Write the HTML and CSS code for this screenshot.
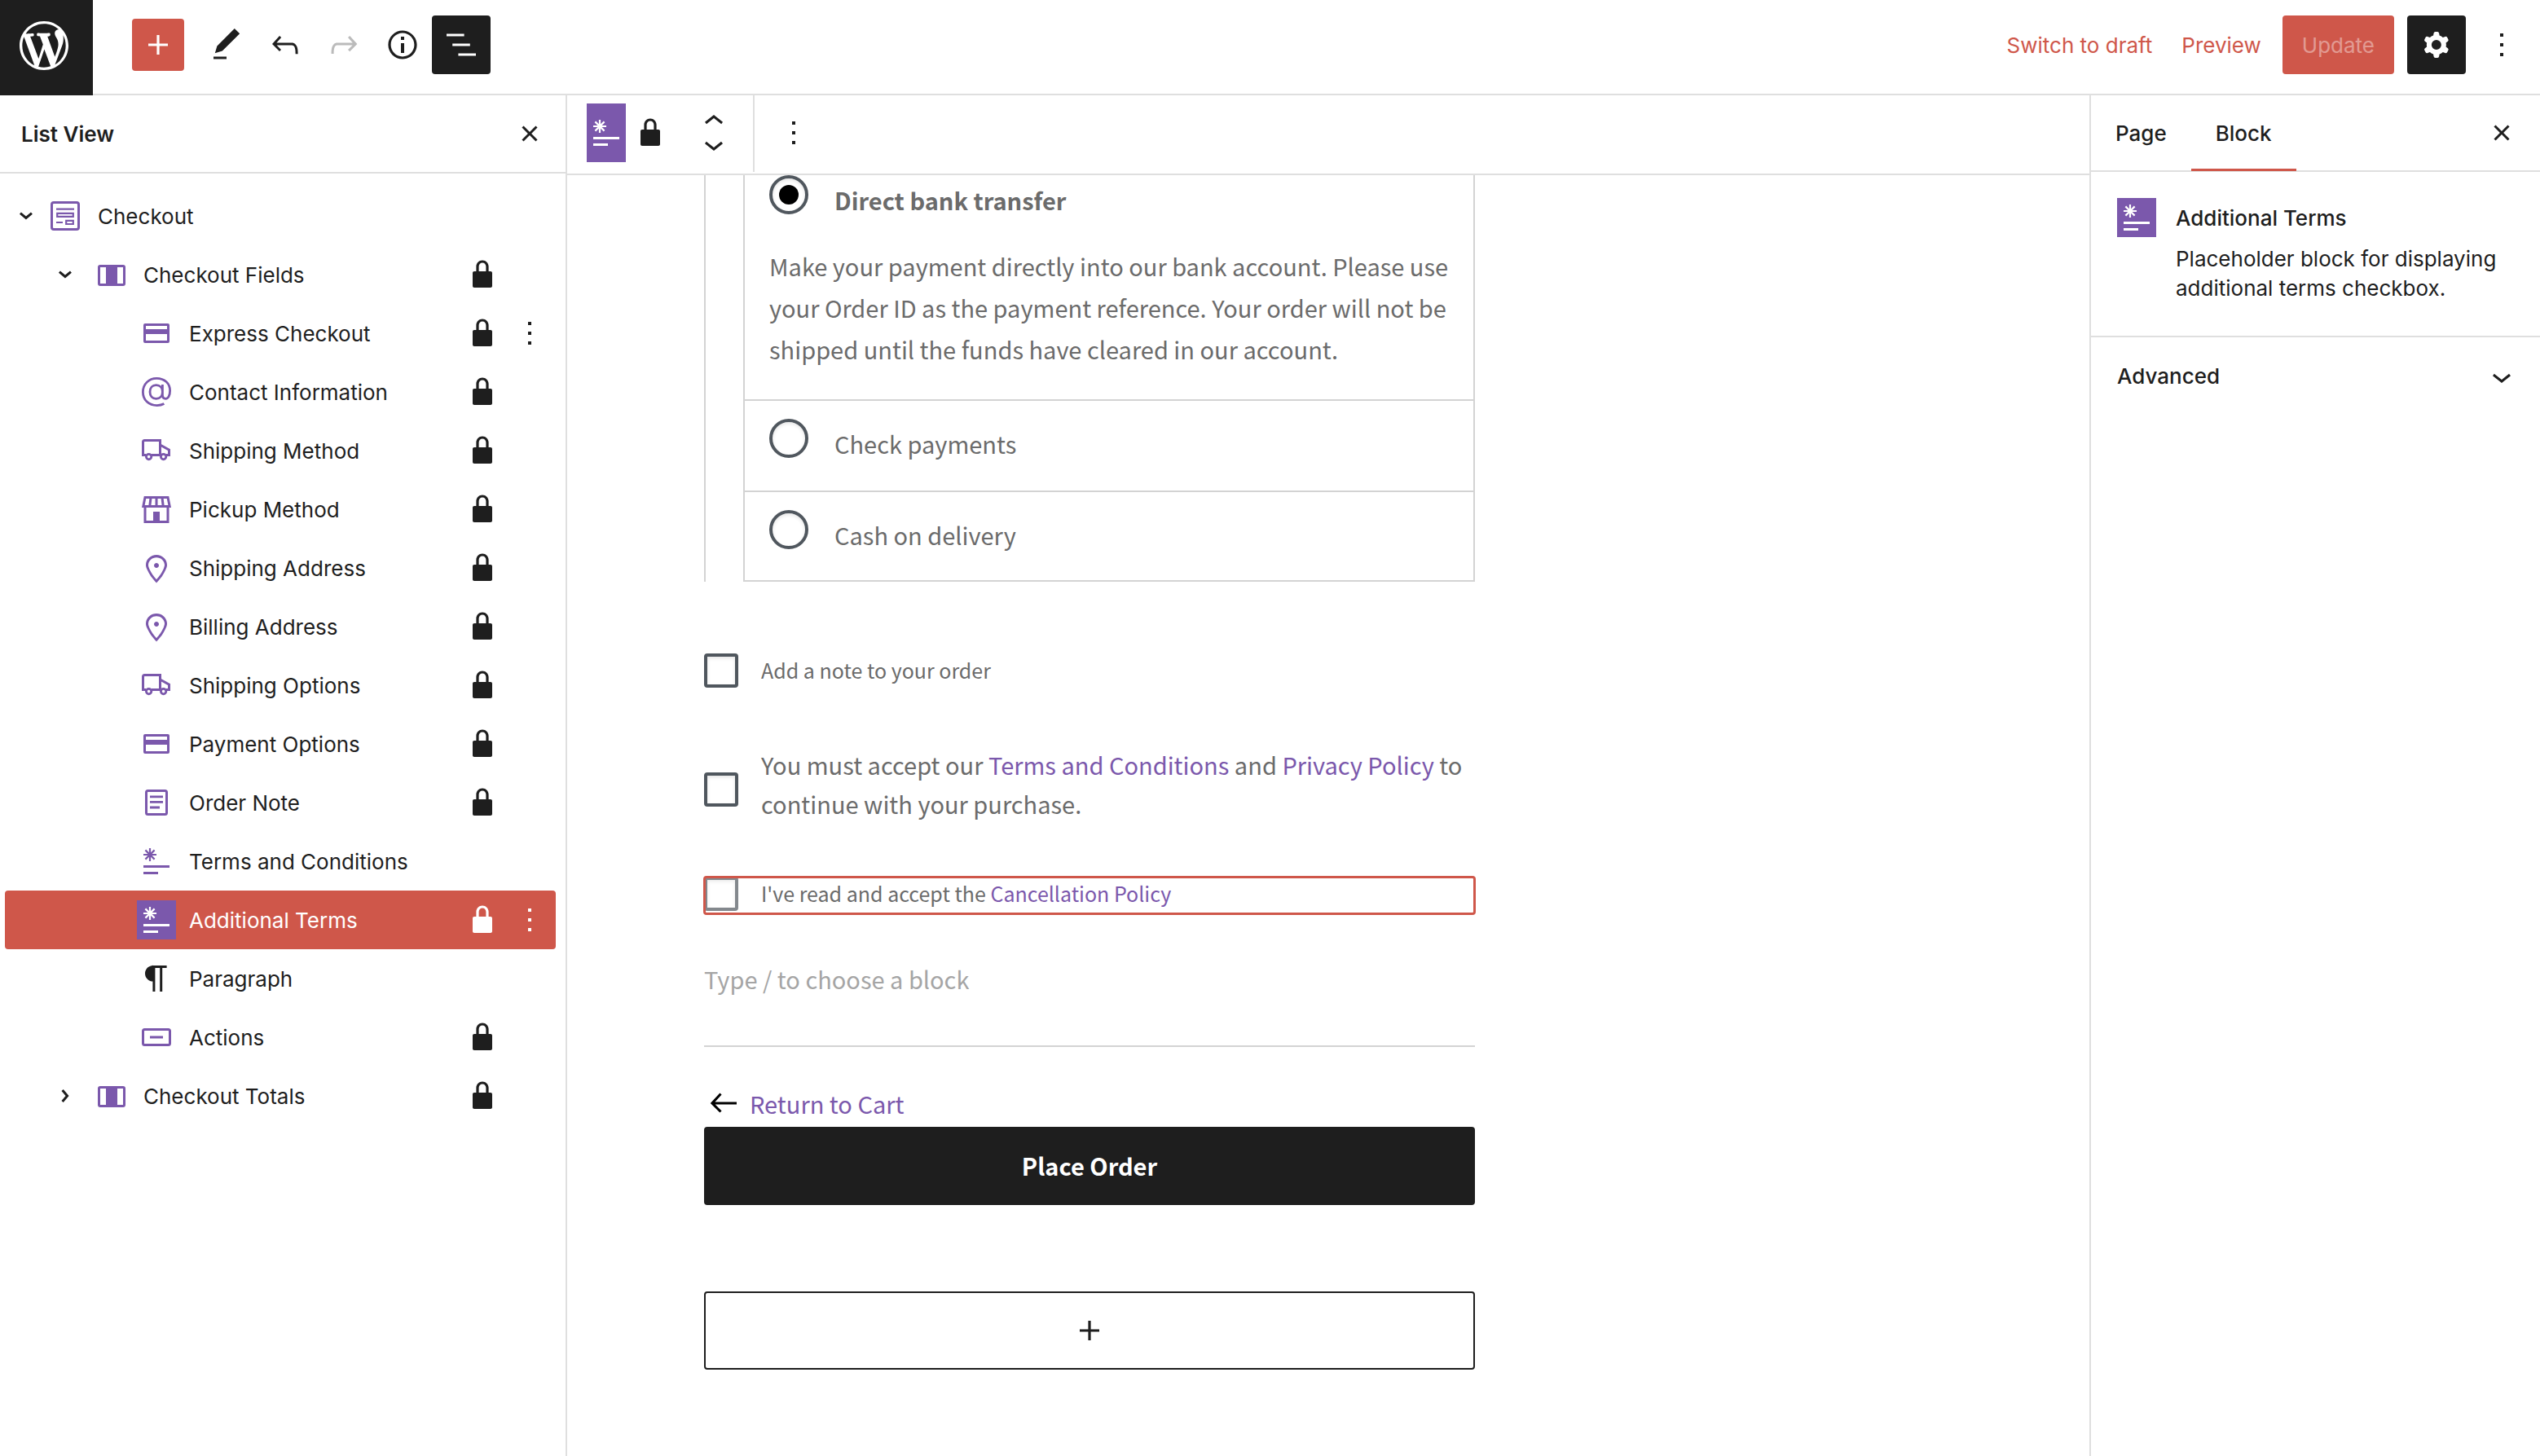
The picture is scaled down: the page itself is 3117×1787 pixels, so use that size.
FILE: index.html
```html
<!DOCTYPE html>
<html lang="en">
<head>
<meta charset="utf-8">
<meta name="viewport" content="width=device-width, initial-scale=1">
<title>Edit Page: Checkout</title>
<link rel="stylesheet" href="styles.css">
</head>
<body>
<svg class="sprite" aria-hidden="true">
  <symbol id="i-plus" viewBox="0 0 24 24"><path d="M18 11.2h-5.2V6h-1.6v5.2H6v1.6h5.2V18h1.6v-5.2H18z"/></symbol>
  <symbol id="i-edit" viewBox="0 0 24 24"><path d="M20.1 5.1L16.9 2 6.2 12.7l-1.3 4.4 4.5-1.3L20.1 5.1zM4 20.8h8v-1.5H4v1.5z"/></symbol>
  <symbol id="i-undo" viewBox="0 0 24 24"><path d="M18.3 11.7c-.6-.6-1.4-.9-2.3-.9H6.7l2.9-3.3-1.1-1-4.5 5L8.5 16l1-1-2.7-2.7H16c.5 0 .9.2 1.3.5 1 1 1 3.4 1 4.5v.3h1.5v-.2c0-1.5 0-4.3-1.5-5.7z"/></symbol>
  <symbol id="i-redo" viewBox="0 0 24 24"><path d="M15.6 6.5l-1.1 1 2.9 3.3H8c-.9 0-1.7.3-2.3.9-1.4 1.5-1.4 4.2-1.4 5.6v.2h1.5v-.3c0-1.1 0-3.5 1-4.5.3-.3.7-.5 1.3-.5h9.2L14.5 15l1.1 1.1 4.6-4.6-4.6-5z"/></symbol>
  <symbol id="i-info" viewBox="0 0 24 24"><path d="M12 3.2c-4.8 0-8.8 3.9-8.8 8.8 0 4.8 3.9 8.8 8.8 8.8 4.8 0 8.8-3.9 8.8-8.8 0-4.8-4-8.8-8.8-8.8zm0 16c-4 0-7.2-3.3-7.2-7.2C4.8 8 8 4.8 12 4.8s7.2 3.3 7.2 7.2c0 4-3.2 7.2-7.2 7.2zM11 17h2v-6h-2v6zm0-8h2V7h-2v2z"/></symbol>
  <symbol id="i-listview" viewBox="0 0 24 24"><path d="M13.8 5.2H3v1.5h10.8V5.2zm-3.6 12v1.5H21v-1.5H10.2zm7.2-6H6.6v1.5h10.8v-1.5z"/></symbol>
  <symbol id="i-cog" viewBox="0 0 24 24"><path fill-rule="evenodd" d="M10.289 4.836A1 1 0 0111.275 4h1.306a1 1 0 01.987.836l.244 1.466c.787.26 1.503.679 2.108 1.218l1.393-.522a1 1 0 011.216.437l.653 1.13a1 1 0 01-.23 1.273l-1.148.944a6.025 6.025 0 010 2.435l1.149.946a1 1 0 01.23 1.272l-.653 1.13a1 1 0 01-1.216.437l-1.394-.522c-.605.54-1.32.958-2.108 1.218l-.244 1.466a1 1 0 01-.987.836h-1.306a1 1 0 01-.986-.836l-.244-1.466a5.995 5.995 0 01-2.108-1.218l-1.394.522a1 1 0 01-1.217-.436l-.653-1.131a1 1 0 01.23-1.272l1.149-.946a6.026 6.026 0 010-2.435l-1.148-.944a1 1 0 01-.23-1.272l.653-1.131a1 1 0 011.217-.437l1.393.522a5.994 5.994 0 012.108-1.218l.244-1.466zM14.929 12a3 3 0 11-6 0 3 3 0 016 0z"/></symbol>
  <symbol id="i-close" viewBox="0 0 24 24"><path d="M12 13.06l3.712 3.713 1.061-1.06L13.061 12l3.712-3.712-1.06-1.06L12 10.938 8.288 7.227l-1.061 1.06L10.939 12l-3.712 3.712 1.06 1.061L12 13.061z"/></symbol>
  <symbol id="i-more" viewBox="0 0 24 24"><path d="M13 19h-2v-2h2v2zm0-6h-2v-2h2v2zm0-6h-2V5h2v2z"/></symbol>
  <symbol id="i-down" viewBox="0 0 24 24"><path d="M17.5 11.6L12 16l-5.5-4.4.9-1.2L12 14l4.5-3.6 1 1.2z"/></symbol>
  <symbol id="i-up" viewBox="0 0 24 24"><path d="M6.5 12.4L12 8l5.5 4.4-.9 1.2L12 10l-4.5 3.6-1-1.2z"/></symbol>
  <symbol id="i-right" viewBox="0 0 24 24"><path d="M10.862 8.04l3.418 3.989-3.418 3.988-1.139-.977 2.582-3.011-2.582-3.012 1.139-.977z"/></symbol>
  <symbol id="i-lock" viewBox="0 0 24 24"><path d="M17 10h-1.2V7c0-2.1-1.7-3.8-3.8-3.8-2.1 0-3.8 1.7-3.8 3.8v3H7c-.6 0-1 .4-1 1v8c0 .6.4 1 1 1h10c.6 0 1-.4 1-1v-8c0-.6-.4-1-1-1zm-2.8 0H9.8V7c0-1.2 1-2.2 2.2-2.2s2.2 1 2.2 2.2v3z"/></symbol>
  <symbol id="i-arrow" viewBox="0 0 24 24"><path d="M20 10.8H6.7l4.1-4.5-1.1-1.1-5.8 6.3 5.8 5.8 1.1-1.1-4-3.9H20z"/></symbol>
  <symbol id="i-checkout" viewBox="0 0 24 24"><path fill="none" stroke="currentColor" stroke-width="1.5" d="M5 3.75h14q1.25 0 1.25 1.25v14q0 1.25-1.25 1.25H5q-1.25 0-1.25-1.25V5q0-1.25 1.25-1.25z"/><path fill="none" stroke="currentColor" stroke-width="1.1" d="M6.5 7.8h11M7.1 10.4h9.800v2H7.100zM6.500 16h4M12.600 14.900h4.300v2.100h-4.300z"/></symbol>
  <symbol id="i-columns" viewBox="-.5 0 24 24"><path fill-rule="evenodd" d="M5 6h14q1.500 0 1.500 1.500v10q0 1.500-1.500 1.500H5q-1.500 0-1.500-1.500v-10Q3.500 6 5 6zm0 1.500v10h3.500v-10zm10.500 0v10H19v-10z"/></symbol>
  <symbol id="i-card" viewBox="0 0 24 24"><path fill-rule="evenodd" d="M5 6h14q1 0 1 1v10q0 1-1 1H5q-1 0-1-1V7q0-1 1-1zm.500 1.500v2h13v-2zm0 5v4h13v-4z"/></symbol>
  <symbol id="i-at" viewBox="0 0 24 24"><path fill="none" stroke="currentColor" stroke-width="1.400" d="M16.700 19.300C15.400 20 13.900 20.300 12.300 20.300 7.300 20.300 3.700 17 3.700 12.100 3.700 7.200 7.300 3.700 12.100 3.700c4.800 0 8.200 3 8.200 7.600 0 2.900-1.100 4.900-2.700 4.900-1.200 0-1.900-.8-1.900-2.400V7.500M15.700 12c0 2.600-1.600 4.200-3.900 4.200S8 14.600 8 12s1.500-4.200 3.800-4.200 3.900 1.600 3.900 4.200"/></symbol>
  <symbol id="i-truck" viewBox="0 0 24 24"><path fill="none" stroke="currentColor" stroke-width="1.500" d="M5.500 14.750H3.750v-8q0-1 1-1h9.500v9H9M14.250 8.500l5.500 3.100v3.150H18"/><circle cx="7.300" cy="15.800" r="1.600" fill="none" stroke="currentColor" stroke-width="1.400"/><circle cx="16.300" cy="15.800" r="1.600" fill="none" stroke="currentColor" stroke-width="1.400"/></symbol>
  <symbol id="i-store" viewBox="0 0 24 24"><path fill="none" stroke="currentColor" stroke-width="1.500" d="M5 4.750h14l1.100 5.500H3.900zM5 10v9.700h14V10M8.500 5l-.600 5M12 5v5M15.500 5l.600 5"/><path d="M10 13.500h4V20h-4z"/></symbol>
  <symbol id="i-pin" viewBox="0 0 24 24"><path d="M12 9c-.8 0-1.5.7-1.5 1.5S11.2 12 12 12s1.5-.7 1.5-1.5S12.8 9 12 9zm0-5c-3.6 0-6.5 2.8-6.5 6.2 0 .8.3 1.8.9 3.1.5 1.1 1.2 2.3 2 3.6.7 1 3 3.8 3.2 3.9l.4.5.4-.5c.2-.2 2.6-2.9 3.2-3.9.8-1.2 1.5-2.5 2-3.6.6-1.3.9-2.3.9-3.1C18.5 6.8 15.6 4 12 4zm4.3 8.7c-.5 1-1.1 2.2-1.9 3.4-.5.7-1.7 2.2-2.4 3-.7-.8-1.9-2.3-2.4-3-.8-1.2-1.4-2.3-1.9-3.3-.6-1.4-.7-2.2-.7-2.5 0-2.6 2.2-4.7 5-4.7s5 2.1 5 4.7c0 .2-.1 1-.7 2.4z"/></symbol>
  <symbol id="i-note" viewBox="0 0 24 24"><rect x="5.750" y="4.750" width="12.500" height="14.500" rx="1" fill="none" stroke="currentColor" stroke-width="1.500"/><path fill="none" stroke="currentColor" stroke-width="1.400" d="M8 8.400h8M8 11.700h8M8 15h6"/></symbol>
  <symbol id="i-terms" viewBox="0 0 24 24"><path fill="none" stroke="currentColor" stroke-width="1.100" d="M8 4v8M4 8h8M5.200 5.200l5.600 5.600M10.800 5.200l-5.600 5.600"/><path d="M4 14.500h16V16H4zM4 18.500h9V20H4z"/></symbol>
  <symbol id="i-para" viewBox="0 0 24 24"><path d="M18.3 4H9.9v-.1l-.9.2c-2.3.4-4 2.4-4 4.8s1.7 4.4 4 4.8l.7.1V20h1.5V5.5h2.9V20h1.5V5.5h2.7V4z"/></symbol>
  <symbol id="i-actions" viewBox="0 0 24 24"><rect x="3.750" y="7.250" width="16.500" height="9.500" rx="1" fill="none" stroke="currentColor" stroke-width="1.500"/><path fill="none" stroke="currentColor" stroke-width="1.500" d="M8 12h8"/></symbol>
  <symbol id="i-wp" viewBox="-2 -2 24 24"><path d="M20 10c0-5.51-4.49-10-10-10C4.48 0 0 4.49 0 10c0 5.52 4.48 10 10 10 5.51 0 10-4.48 10-10zM7.78 15.37L4.37 6.22c.55-.02 1.17-.08 1.17-.08.5-.06.44-1.13-.06-1.11 0 0-1.45.11-2.37.11-.18 0-.37 0-.58-.01C4.12 2.69 6.87 1.11 10 1.11c2.33 0 4.45.87 6.05 2.34-.68-.11-1.65.39-1.65 1.58 0 .74.45 1.36.9 2.1.35.61.55 1.36.55 2.46 0 1.49-1.4 5-1.4 5l-3.03-8.37c.54-.02.82-.17.82-.17.5-.05.44-1.25-.06-1.22 0 0-1.44.12-2.38.12-.87 0-2.33-.12-2.33-.12-.5-.03-.56 1.2-.06 1.22l.92.08 1.26 3.41zM17.41 10c.24-.64.74-1.87.43-4.25.7 1.29 1.05 2.71 1.05 4.25 0 3.29-1.73 6.24-4.4 7.78.97-2.59 1.94-5.2 2.92-7.78zM6.1 18.09C3.12 16.65 1.11 13.53 1.11 10c0-1.3.23-2.48.72-3.59C3.25 10.3 4.67 14.2 6.1 18.09zm4.03-6.63l2.58 6.98c-.86.29-1.76.45-2.71.45-.79 0-1.57-.11-2.29-.33.81-2.38 1.62-4.74 2.42-7.1z"/></symbol>
</svg>

<div class="editor">
  <header class="header">
    <a class="logo" href="#" aria-label="View Pages"><svg class="logo-mark"><use href="#i-wp"/></svg></a>
    <div class="tools">
      <button class="inserter" type="button" aria-label="Add block"><svg class="icon"><use href="#i-plus"/></svg></button>
      <div class="tool-group">
        <button class="tool" type="button" aria-label="Tools"><svg class="icon"><use href="#i-edit"/></svg></button>
        <button class="tool" type="button" aria-label="Undo"><svg class="icon"><use href="#i-undo"/></svg></button>
        <button class="tool tool-off" type="button" aria-label="Redo" disabled><svg class="icon"><use href="#i-redo"/></svg></button>
        <button class="tool" type="button" aria-label="Details"><svg class="icon"><use href="#i-info"/></svg></button>
        <button class="tool tool-on" type="button" aria-label="List View" aria-pressed="true"><svg class="icon"><use href="#i-listview"/></svg></button>
      </div>
    </div>
    <div class="publish">
      <button class="text-btn" type="button">Switch to draft</button>
      <button class="text-btn" type="button">Preview</button>
      <button class="update" type="button" disabled><span class="update-label">Update</span></button>
      <button class="tool tool-on" type="button" aria-label="Settings" aria-pressed="true"><svg class="icon"><use href="#i-cog"/></svg></button>
      <button class="tool tool-last" type="button" aria-label="Options"><svg class="icon"><use href="#i-more"/></svg></button>
    </div>
  </header>

  <div class="body">
    <aside class="list-view" aria-label="List View">
      <div class="list-head">
        <h2 class="list-title">List View</h2>
        <button class="icon-btn" type="button" aria-label="Close"><svg class="icon"><use href="#i-close"/></svg></button>
      </div>
      <ul class="tree">
        <li class="row"><button class="exp open" type="button" aria-label="Collapse"><svg class="icon"><use href="#i-right"/></svg></button><svg class="icon woo"><use href="#i-checkout"/></svg><a class="name" href="#">Checkout</a></li>
        <li class="row level-2"><button class="exp open" type="button" aria-label="Collapse"><svg class="icon"><use href="#i-right"/></svg></button><svg class="icon woo"><use href="#i-columns"/></svg><a class="name" href="#">Checkout Fields</a><svg class="icon lock"><use href="#i-lock"/></svg></li>
        <li class="row level-3"><svg class="icon woo"><use href="#i-card"/></svg><a class="name" href="#">Express Checkout</a><svg class="icon lock"><use href="#i-lock"/></svg><button class="icon-btn row-more" type="button" aria-label="Options"><svg class="icon"><use href="#i-more"/></svg></button></li>
        <li class="row level-3"><svg class="icon woo"><use href="#i-at"/></svg><a class="name" href="#">Contact Information</a><svg class="icon lock"><use href="#i-lock"/></svg></li>
        <li class="row level-3"><svg class="icon woo"><use href="#i-truck"/></svg><a class="name" href="#">Shipping Method</a><svg class="icon lock"><use href="#i-lock"/></svg></li>
        <li class="row level-3"><svg class="icon woo"><use href="#i-store"/></svg><a class="name" href="#">Pickup Method</a><svg class="icon lock"><use href="#i-lock"/></svg></li>
        <li class="row level-3"><svg class="icon woo"><use href="#i-pin"/></svg><a class="name" href="#">Shipping Address</a><svg class="icon lock"><use href="#i-lock"/></svg></li>
        <li class="row level-3"><svg class="icon woo"><use href="#i-pin"/></svg><a class="name" href="#">Billing Address</a><svg class="icon lock"><use href="#i-lock"/></svg></li>
        <li class="row level-3"><svg class="icon woo"><use href="#i-truck"/></svg><a class="name" href="#">Shipping Options</a><svg class="icon lock"><use href="#i-lock"/></svg></li>
        <li class="row level-3"><svg class="icon woo"><use href="#i-card"/></svg><a class="name" href="#">Payment Options</a><svg class="icon lock"><use href="#i-lock"/></svg></li>
        <li class="row level-3"><svg class="icon woo"><use href="#i-note"/></svg><a class="name" href="#">Order Note</a><svg class="icon lock"><use href="#i-lock"/></svg></li>
        <li class="row level-3"><svg class="icon woo"><use href="#i-terms"/></svg><a class="name" href="#">Terms and Conditions</a></li>
        <li class="row level-3 selected"><svg class="icon tile"><use href="#i-terms"/></svg><a class="name" href="#" aria-current="true">Additional Terms</a><svg class="icon lock"><use href="#i-lock"/></svg><button class="icon-btn row-more" type="button" aria-label="Options"><svg class="icon"><use href="#i-more"/></svg></button></li>
        <li class="row level-3"><svg class="icon"><use href="#i-para"/></svg><a class="name" href="#">Paragraph</a></li>
        <li class="row level-3"><svg class="icon woo"><use href="#i-actions"/></svg><a class="name" href="#">Actions</a><svg class="icon lock"><use href="#i-lock"/></svg></li>
        <li class="row level-2"><button class="exp" type="button" aria-label="Expand"><svg class="icon"><use href="#i-right"/></svg></button><svg class="icon woo"><use href="#i-columns"/></svg><a class="name" href="#">Checkout Totals</a><svg class="icon lock"><use href="#i-lock"/></svg></li>
      </ul>
    </aside>

    <main class="main">
      <div class="toolbar" role="toolbar" aria-label="Block tools">
        <div class="toolbar-group">
          <button class="block-type" type="button" aria-label="Additional Terms"><svg class="icon"><use href="#i-terms"/></svg></button>
          <button class="icon-btn" type="button" aria-label="Unlock"><svg class="icon"><use href="#i-lock"/></svg></button>
          <div class="movers">
            <button class="mover" type="button" aria-label="Move up"><svg class="icon"><use href="#i-up"/></svg></button>
            <button class="mover" type="button" aria-label="Move down"><svg class="icon"><use href="#i-down"/></svg></button>
          </div>
        </div>
        <div class="toolbar-group toolbar-end">
          <button class="icon-btn" type="button" aria-label="Options"><svg class="icon"><use href="#i-more"/></svg></button>
        </div>
      </div>

      <div class="canvas">
        <form class="checkout">
          <div class="step">
            <div class="payments">
              <div class="option option-first">
                <input class="radio" type="radio" name="payment" id="bank" checked>
                <label class="option-label chosen" for="bank">Direct bank transfer</label>
              </div>
              <p class="option-text">Make your payment directly into our bank account. Please use your Order ID as the payment reference. Your order will not be shipped until the funds have cleared in our account.</p>
              <div class="option">
                <input class="radio" type="radio" name="payment" id="check">
                <label class="option-label" for="check">Check payments</label>
              </div>
              <div class="option option-last">
                <input class="radio" type="radio" name="payment" id="cash">
                <label class="option-label" for="cash">Cash on delivery</label>
              </div>
            </div>
          </div>
          <div class="check-row note">
            <input class="checkbox" type="checkbox" id="note">
            <label class="small" for="note">Add a note to your order</label>
          </div>
          <div class="check-row terms">
            <input class="checkbox" type="checkbox" id="terms">
            <label class="terms-text" for="terms">You must accept our <a class="link" href="#">Terms and Conditions</a> and <a class="link" href="#">Privacy Policy</a> to continue with your purchase.</label>
          </div>
          <div class="check-row additional">
            <input class="checkbox checkbox-dim" type="checkbox" id="cancel">
            <label class="small" for="cancel">I've read and accept the <a class="link" href="#">Cancellation Policy</a></label>
          </div>
          <p class="placeholder">Type / to choose a block</p>
          <hr class="rule">
          <a class="link return" href="#"><svg class="icon arrow"><use href="#i-arrow"/></svg>Return to Cart</a>
          <button class="place" type="button">Place Order</button>
          <button class="append" type="button" aria-label="Add block"><svg class="icon"><use href="#i-plus"/></svg></button>
        </form>
      </div>
    </main>

    <aside class="settings" aria-label="Settings">
      <div class="tabs">
        <button class="tab" type="button">Page</button>
        <button class="tab tab-on" type="button">Block</button>
        <button class="icon-btn tabs-close" type="button" aria-label="Close settings"><svg class="icon"><use href="#i-close"/></svg></button>
      </div>
      <section class="card">
        <svg class="icon tile"><use href="#i-terms"/></svg>
        <div class="card-text">
          <h2 class="card-title">Additional Terms</h2>
          <p class="card-desc">Placeholder block for displaying additional terms checkbox.</p>
        </div>
      </section>
      <button class="panel" type="button" aria-expanded="false">Advanced<svg class="icon"><use href="#i-down"/></svg></button>
    </aside>
  </div>
</div>
</body>
</html>
```
FILE: styles.css
```css
* {
  box-sizing: border-box;
}

:root {
  --ink: #1e1e1e;
  --accent: #cf574a;
  --woo: #7b58ac;
  --line: #dfdfdf;
  --field-line: #d3d3d3;
  --text: #6b6b6b;
}

body {
  margin: 0;
  background: #fff;
  color: var(--ink);
  font: 26px/36px Inter, "Liberation Sans", sans-serif;
}

button {
  margin: 0;
  padding: 0;
  border: 0;
  background: none;
  color: inherit;
  font: inherit;
}

h2,
p,
ul {
  margin: 0;
  padding: 0;
  font-size: inherit;
}

.sprite {
  position: absolute;
  width: 0;
  height: 0;
}

.icon {
  display: block;
  flex: none;
  width: 48px;
  height: 48px;
  fill: currentColor;
}

.icon-btn {
  flex: none;
  width: 48px;
  height: 48px;
}

.editor {
  display: flex;
  flex-direction: column;
  height: 100vh;
  overflow: hidden;
}

/* Top bar */
.header {
  display: flex;
  flex: none;
  height: 117px;
  border-bottom: 2px solid var(--line);
}

.logo {
  display: flex;
  align-items: center;
  flex: none;
  width: 114px;
  height: 117px;
  padding: 0 0 5px 18px;
  background: var(--ink);
  color: #fff;
}

.logo-mark {
  width: 72px;
  height: 72px;
  fill: currentColor;
}

.tools,
.tool-group,
.publish {
  display: flex;
  align-items: center;
}

.tools {
  flex: 1;
  gap: 16px;
  padding: 0 0 5px 48px;
}

.publish {
  gap: 16px;
  padding: 0 11px 5px 0;
}

.inserter,
.tool {
  display: grid;
  place-items: center;
  width: 72px;
  height: 72px;
  border-radius: 4px;
}

.inserter {
  width: 64px;
  height: 64px;
  background: var(--accent);
  color: #fff;
}

.tool-off {
  color: #bbb;
}

.tool-on {
  background: var(--ink);
  color: #fff;
}

.tool-last {
  margin-left: -8px;
}

.text-btn {
  padding: 2px 10px 0;
  color: var(--accent);
}

.update {
  height: 72px;
  padding: 2px 24px 0;
  border-radius: 4px;
  background: var(--accent);
  color: #fff;
}

.update-label {
  opacity: .4;
}

.body {
  display: flex;
  flex: 1;
  min-height: 0;
}

/* List view */
.list-view {
  flex: none;
  width: 696px;
  border-right: 2px solid var(--line);
}

.list-head {
  display: flex;
  align-items: center;
  justify-content: space-between;
  height: 96px;
  padding: 0 20px 0 26px;
  border-bottom: 2px solid var(--line);
}

.list-title {
  padding-top: 2px;
  font-weight: 600;
}

.tree {
  padding: 16px 12px 0 6px;
  list-style: none;
}

.row {
  display: flex;
  align-items: center;
  height: 72px;
  padding: 0 66px 0 2px;
  border-radius: 4px;
}

.level-2 {
  padding-left: 50px;
}

.level-3 {
  padding-left: 162px;
}

.exp {
  flex: none;
  width: 48px;
  height: 48px;
}

.level-2 .exp {
  margin-right: 8px;
}

.open .icon {
  transform: rotate(90deg);
}

.woo {
  color: var(--woo);
}

.tile {
  background: var(--woo);
  color: #fff;
}

.name {
  flex: 1;
  margin-left: 16px;
  padding-top: 2px;
  color: inherit;
  text-decoration: none;
}

.row-more {
  margin: 0 -58px 0 10px;
}

.selected {
  background: var(--accent);
  color: #fff;
}

/* Editor area */
.main {
  display: flex;
  flex: 1;
  flex-direction: column;
  min-width: 0;
}

.toolbar {
  display: flex;
  flex: none;
  height: 98px;
  border-bottom: 2px solid var(--line);
}

.toolbar-group {
  display: flex;
  align-items: center;
  height: 94px;
  padding: 0 24px 2px;
  border-right: 2px solid var(--line);
}

.toolbar-end {
  border-right: 0;
}

.block-type {
  display: grid;
  place-items: center;
  width: 48px;
  height: 72px;
  margin-right: 6px;
  background: var(--woo);
  color: #fff;
}

.movers {
  display: flex;
  flex-direction: column;
  margin-left: 30px;
}

.mover {
  display: flex;
  align-items: center;
  height: 28px;
}

.canvas {
  display: grid;
  grid-template-columns: minmax(0, 946px) 1fr;
  flex: 1;
  min-height: 0;
  padding: 0 168px;
  overflow: hidden;
  color: var(--text);
  font: 29px/52px "Noto Sans CJK SC", "Noto Sans", sans-serif;
}

.step {
  padding-left: 46px;
  border-left: 2px solid var(--field-line);
}

.payments {
  border: 2px solid var(--field-line);
  border-top: 0;
}

.option {
  display: flex;
  align-items: flex-start;
  gap: 32px;
  padding: 22px 30px 32px;
  border-top: 2px solid var(--field-line);
}

.option-first {
  padding-top: 0;
  padding-bottom: 30px;
  border-top: 0;
}

.option-last {
  padding-bottom: 30px;
}

.option-label {
  padding-top: 4px;
}

.chosen {
  font-weight: 700;
}

.option-text {
  padding: 0 30px 36px;
  line-height: 51px;
}

.radio,
.checkbox {
  flex: none;
  margin: 0;
  border: 4px solid #50575e;
  background: #fff;
  box-shadow: inset 0 2px 4px rgba(0, 0, 0, .1);
  appearance: none;
}

.radio {
  display: grid;
  place-items: center;
  width: 48px;
  height: 48px;
  border-radius: 50%;
}

.radio:checked::before {
  width: 24px;
  height: 24px;
  border-radius: 50%;
  background: #000;
  content: "";
}

.checkbox {
  width: 42px;
  height: 42px;
  border-radius: 4px;
}

.checkbox-dim {
  opacity: .7;
}

.check-row {
  display: flex;
  align-items: flex-start;
  gap: 28px;
}

.small {
  font-size: 25px;
  line-height: 41px;
}

.note {
  margin-top: 88px;
}

.terms {
  margin-top: 70px;
}

.terms .checkbox {
  margin-top: 34px;
}

.terms-text {
  line-height: 48px;
}

.additional {
  position: relative;
  height: 46px;
  margin-top: 66px;
}

.additional::after {
  position: absolute;
  inset: -1px;
  border: 3px solid var(--accent);
  border-radius: 4px;
  content: "";
  pointer-events: none;
}

.link {
  color: var(--woo);
  text-decoration: none;
}

.placeholder {
  margin-top: 53px;
  color: #a5a5a5;
}

.rule {
  height: 2px;
  margin: 56px 0 46px;
  border: 0;
  background: var(--field-line);
}

.return {
  display: flex;
  gap: 8px;
  line-height: 46px;
}

.arrow {
  color: #000;
}

.place,
.append {
  display: grid;
  place-items: center;
  width: 100%;
  height: 96px;
  border-radius: 4px;
}

.place {
  margin-top: 4px;
  padding-bottom: 2px;
  background: var(--ink);
  color: #fff;
  font-weight: 700;
}

.append {
  margin-top: 106px;
  border: 2px solid var(--ink);
  color: var(--ink);
}

/* Settings sidebar */
.settings {
  flex: none;
  width: 553px;
  border-left: 2px solid var(--line);
}

.tabs {
  display: flex;
  align-items: center;
  height: 94px;
  padding-right: 23px;
  border-bottom: 2px solid var(--line);
}

.tab {
  height: 94px;
  padding: 2px 30px 0;
  font-weight: 500;
}

.tab-on {
  box-shadow: inset 0 -3px var(--accent);
}

.tabs-close {
  margin-left: auto;
}

.card {
  display: flex;
  gap: 24px;
  padding: 32px 24px 40px 32px;
}

.card-title {
  padding-top: 1px;
  font-weight: 500;
  line-height: 48px;
}

.card-desc {
  margin-top: 8px;
}

.panel {
  display: flex;
  align-items: center;
  justify-content: space-between;
  width: 100%;
  height: 98px;
  padding: 0 23px 0 32px;
  border-top: 2px solid var(--line);
  font-weight: 500;
}
```
